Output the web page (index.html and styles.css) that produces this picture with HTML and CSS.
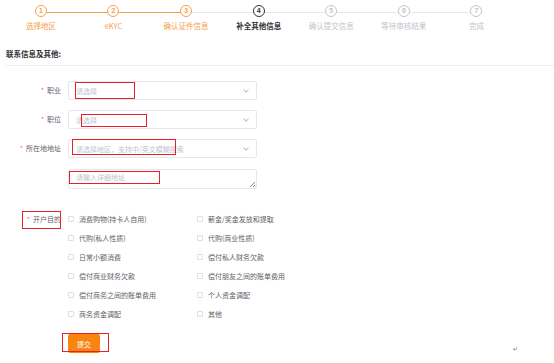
FILE: index.html
```html
<!DOCTYPE html>
<html lang="zh-CN">
<head>
<meta charset="utf-8">
<title>补全其他信息</title>
<link rel="stylesheet" href="styles.css">
</head>
<body>
<div class="page">
  <div class="steps">
    <div class="step done line-done"><span class="circle">1</span><span class="label">选择地区</span></div>
    <div class="step done line-done"><span class="circle">2</span><span class="label">eKYC</span></div>
    <div class="step done"><span class="circle">3</span><span class="label">确认证件信息</span></div>
    <div class="step active"><span class="circle">4</span><span class="label">补全其他信息</span></div>
    <div class="step todo"><span class="circle">5</span><span class="label">确认提交信息</span></div>
    <div class="step todo"><span class="circle">6</span><span class="label">等待审核结果</span></div>
    <div class="step todo last"><span class="circle">7</span><span class="label">完成</span></div>
  </div>

  <h2 class="section-title">联系信息及其他:</h2>

  <div class="form">
    <div class="row">
      <label class="lbl"><i>*</i>职业</label>
      <div class="select"><span class="ph">请选择</span><span class="chev"></span></div>
    </div>
    <div class="row">
      <label class="lbl"><i>*</i>职位</label>
      <div class="select"><span class="ph">请选择</span><span class="chev"></span></div>
    </div>
    <div class="row">
      <label class="lbl"><i>*</i>所在地地址</label>
      <div class="select"><span class="ph">请选择地区，支持中/英文模糊搜索</span><span class="chev"></span></div>
    </div>
    <div class="row">
      <span class="lbl"></span>
      <div class="textarea"><span class="ph">请输入详细地址</span><span class="grip"></span></div>
    </div>
    <div class="row checks-row">
      <label class="lbl"><i>*</i>开户目的</label>
      <div class="checks">
        <div class="ck"><span class="box"></span>消费购物(持卡人自用)</div>
        <div class="ck"><span class="box"></span>薪金/奖金发放和提取</div>
        <div class="ck"><span class="box"></span>代购(私人性质)</div>
        <div class="ck"><span class="box"></span>代购(商业性质)</div>
        <div class="ck"><span class="box"></span>日常小额消费</div>
        <div class="ck"><span class="box"></span>偿付私人财务欠款</div>
        <div class="ck"><span class="box"></span>偿付商业财务欠款</div>
        <div class="ck"><span class="box"></span>偿付朋友之间的账单费用</div>
        <div class="ck"><span class="box"></span>偿付商务之间的账单费用</div>
        <div class="ck"><span class="box"></span>个人资金调配</div>
        <div class="ck"><span class="box"></span>商务资金调配</div>
        <div class="ck"><span class="box"></span>其他</div>
      </div>
    </div>
    <div class="row btn-row">
      <span class="lbl"></span>
      <button class="submit">提交</button>
      <span class="para">↵</span>
    </div>
  </div>

  <div class="mark m1"></div>
  <div class="mark m2"></div>
  <div class="mark m3"></div>
  <div class="mark m4"></div>
  <div class="mark m5"></div>
  <div class="mark m6"></div>
</div>
</body>
</html>
```

FILE: styles.css
```css
* { box-sizing: border-box; }
html, body { margin: 0; padding: 0; background: #fff; }
body {
  font-family: "Noto Sans CJK SC", "Noto Sans", sans-serif;
  color: #606266;
  width: 554px;
  height: 363px;
  overflow: hidden;
}
.page { position: relative; width: 554px; height: 363px; }

/* steps */
.steps {
  display: flex;
  padding: 5px 0 0 4.6px;
}
.step {
  position: relative;
  width: 72.6px;
  display: flex;
  flex-direction: column;
  align-items: center;
}
.step::after {
  content: "";
  position: absolute;
  top: 6.5px;
  left: 50%;
  width: 72.6px;
  height: 1px;
  background: #e4e7ed;
  z-index: 0;
}
.step.line-done::after { background: #f7a04b; }
.step.last::after { display: none; }
.circle {
  position: relative;
  z-index: 1;
  width: 12px;
  height: 12px;
  border-radius: 50%;
  border: 1px solid #c0c4cc;
  background: #fff;
  font-size: 7px;
  line-height: 10px;
  text-align: center;
  font-family: "Liberation Sans", sans-serif;
  font-weight: bold;
  color: #c0c4cc;
}
.label {
  margin-top: 4px;
  font-size: 7.5px;
  line-height: 10px;
  white-space: nowrap;
  color: #c0c4cc;
}
.step.done .circle { border-color: #f7a04b; color: #f7a04b; }
.step.done .label { color: #f7a04b; }
.step.active .circle { border-color: #303133; color: #303133; }
.step.active .label { color: #303133; font-weight: bold; }

/* title */
.section-title {
  margin: 18px 0 0 6px;
  padding-bottom: 6px;
  border-bottom: 1px solid #ebeef5;
  font-size: 7.5px;
  line-height: 10px;
  font-weight: bold;
  color: #303133;
}

/* form */
.form { display: flex; flex-direction: column; padding-top: 15px; }
.row { display: flex; align-items: flex-start; margin-bottom: 10px; }
.lbl {
  width: 62px;
  flex: none;
  text-align: right;
  padding-right: 1px;
  font-size: 7px;
  line-height: 19px;
  color: #606266;
  white-space: nowrap;
}
.lbl i { font-style: normal; color: #f56c6c; margin-right: 3px; }
.select, .textarea {
  position: relative;
  margin-left: 6px;
  width: 189px;
  height: 19px;
  border: 1px solid #e4e7ed;
  border-radius: 2px;
  display: flex;
  align-items: center;
  padding-left: 7px;
}
.textarea { height: 20px; align-items: flex-start; padding-top: 2px; margin-top: 1px; }
.ph { font-size: 7px; color: #c0c4cc; white-space: nowrap; }
.chev {
  position: absolute;
  right: 8px;
  top: 6px;
  width: 4px;
  height: 4px;
  border-right: 1px solid #c0c4cc;
  border-bottom: 1px solid #c0c4cc;
  transform: rotate(45deg);
}
.grip {
  position: absolute;
  right: 1px;
  bottom: 1px;
  width: 5px;
  height: 5px;
  background: linear-gradient(135deg, transparent 45%, #888 45%, #888 55%, transparent 55%, transparent 70%, #888 70%, #888 80%, transparent 80%);
}

.checks-row { margin-top: 11px; margin-bottom: 0; }
.checks-row .lbl { line-height: 18px; }
.checks {
  margin-left: 6px;
  display: grid;
  grid-template-columns: 129px 129px;
  grid-auto-rows: 19px;
}
.ck {
  display: flex;
  align-items: center;
  height: 18px;
  font-size: 7px;
  color: #606266;
  white-space: nowrap;
}
.box {
  width: 6px;
  height: 6px;
  border: 1px solid #dcdfe6;
  border-radius: 1px;
  margin-right: 5px;
  flex: none;
}

.btn-row { margin-top: 10px; align-items: flex-end; }
.submit {
  margin-left: 6px;
  width: 32px;
  height: 19px;
  border: none;
  border-radius: 2px;
  background: #f7850f;
  color: #fff;
  font-family: "Noto Sans CJK SC", sans-serif;
  font-size: 7px;
  padding: 0;
}
.para {
  margin-left: 413px;
  font-size: 6px;
  color: #777;
  line-height: 8px;
}

/* red annotation boxes */
.mark { position: absolute; border: 1.5px solid #e82028; }
.m1 { left: 75px; top: 82px; width: 60px; height: 17px; }
.m2 { left: 81px; top: 114px; width: 66px; height: 13px; }
.m3 { left: 72px; top: 139px; width: 104px; height: 16px; }
.m4 { left: 69px; top: 171px; width: 91px; height: 13px; }
.m5 { left: 22px; top: 211px; width: 39px; height: 18px; }
.m6 { left: 62px; top: 333px; width: 47px; height: 19px; }
```
